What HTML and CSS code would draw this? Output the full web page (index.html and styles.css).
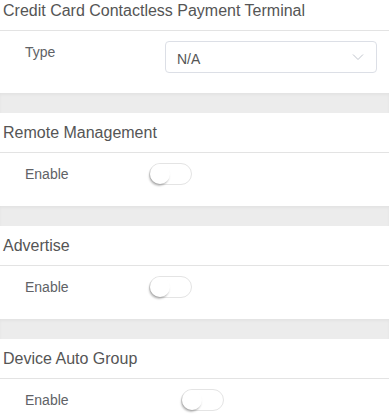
FILE: index.html
```html
<!DOCTYPE html>
<html>
<head>
<meta charset="utf-8">
<link rel="stylesheet" href="styles.css">
</head>
<body>
<div class="page">
  <section class="card">
    <div class="card-title">Credit Card Contactless Payment Terminal</div>
    <div class="row row-select">
      <div class="label label-w140">Type</div>
      <div class="select">
        <span class="select-value">N/A</span>
        <svg class="chev" width="12" height="8" viewBox="0 0 12 8"><path d="M1 1.5 L6 6.5 L11 1.5" fill="none" stroke="#c0c4cc" stroke-width="1"/></svg>
      </div>
    </div>
  </section>
  <div class="band"></div>
  <section class="card">
    <div class="card-title">Remote Management</div>
    <div class="row">
      <div class="label label-w124">Enable</div>
      <div class="switch"><span class="knob"></span></div>
    </div>
  </section>
  <div class="band"></div>
  <section class="card">
    <div class="card-title">Advertise</div>
    <div class="row">
      <div class="label label-w124">Enable</div>
      <div class="switch"><span class="knob"></span></div>
    </div>
  </section>
  <div class="band"></div>
  <section class="card">
    <div class="card-title">Device Auto Group</div>
    <div class="row">
      <div class="label label-w156">Enable</div>
      <div class="switch"><span class="knob"></span></div>
    </div>
  </section>
</div>
</body>
</html>
```

FILE: styles.css
```css
html, body {
  margin: 0;
  padding: 0;
  background: #ffffff;
  overflow: hidden;
}
body {
  font-family: "Liberation Sans", Arial, sans-serif;
  color: #606266;
}
.page {
  margin-top: -9px;
}
.card {
  background: #fff;
}
.card-title {
  height: 39px;
  line-height: 39px;
  padding-left: 3px;
  font-size: 16px;
  color: #555555;
  border-bottom: 1px solid #e3e3e3;
}
.row {
  display: flex;
  align-items: center;
  padding: 10px 0 21.5px 25px;
}
.row-select {
  align-items: flex-start;
  padding: 10px 12px 20px 25px;
}
.label {
  font-size: 14px;
  line-height: 22px;
  color: #606266;
  flex: none;
}
.label-w140 { width: 140px; }
.label-w124 { width: 124px; }
.label-w156 { width: 156px; }
.select {
  flex: 1;
  height: 30px;
  border: 1px solid #dcdfe6;
  border-radius: 4px;
  display: flex;
  align-items: center;
  justify-content: space-between;
  padding: 0 12px 0 11px;
  box-sizing: content-box;
}
.select-value {
  font-size: 14px;
  color: #555;
  padding-top: 3px;
}
.chev {
  display: block;
}
.switch {
  position: relative;
  width: 41px;
  height: 20px;
  border: 1px solid #e4e4e4;
  border-radius: 11px;
  background: #fff;
  flex: none;
}
.knob {
  position: absolute;
  left: 0;
  top: 0;
  width: 20px;
  height: 20px;
  border-radius: 50%;
  background: #fff;
  box-shadow: -1px 2px 2px rgba(0, 0, 0, 0.25);
}
.band {
  height: 19.5px;
  background: #ececec;
  box-shadow: inset 0 2px 3px rgba(0, 0, 0, 0.04);
}
```
